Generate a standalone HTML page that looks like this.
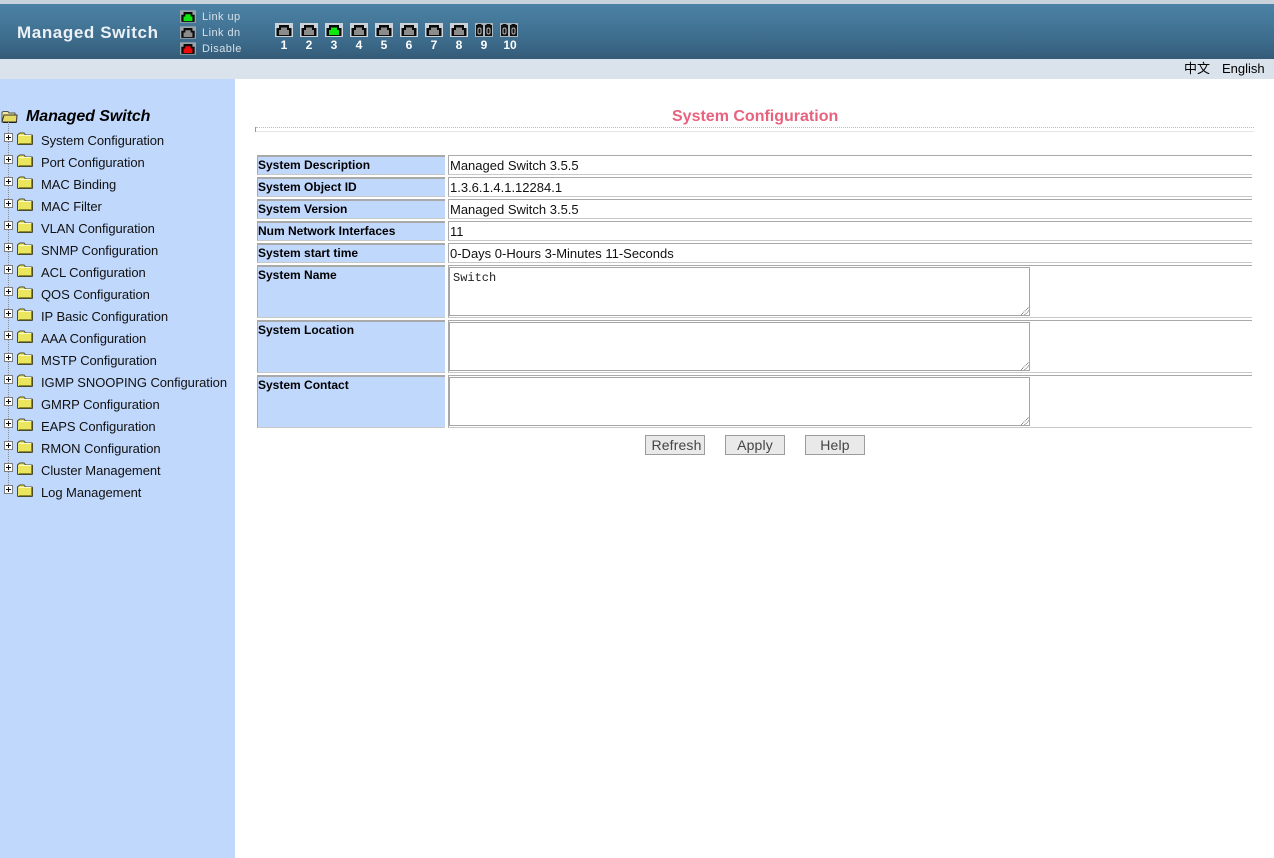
<!DOCTYPE html>
<html lang="en"><head><meta charset="utf-8"><title>System Configuration</title>
<style>
html,body{margin:0;padding:0;background:#fff;}
body{width:1274px;height:858px;position:relative;overflow:hidden;font-family:"Liberation Sans","Noto Sans CJK SC",sans-serif;color:#000;}
.a{position:absolute;white-space:nowrap;}
#top{left:0;top:0;width:1274px;height:59px;background:linear-gradient(#4b82a5 0,#467a9c 25%,#3d6c8c 65%,#345b78 100%);border-top:4px solid #c9d3db;box-sizing:border-box;}
#bar{left:0;top:59px;width:1274px;height:20px;background:#dae3ec;}
#side{left:0;top:79px;width:235px;height:779px;background:#c1d8fd;}
.leg{color:#d5e0e8;font-size:11px;letter-spacing:.45px;line-height:12px;left:202px;}
.n{color:#fff;font-weight:bold;font-size:12px;line-height:14px;top:38px;width:24px;text-align:center;}
.m{left:41px;font-size:13px;letter-spacing:-.06px;line-height:16px;color:#111;}
.l{left:257px;width:188px;background:#c1d8fd;border-top:2px solid #a9a9a9;border-left:1px solid #a9a9a9;border-bottom:1px solid #c8c8c8;box-sizing:border-box;font-weight:bold;font-size:12px;line-height:16px;color:#000;}
.v{left:448px;width:804px;border-top:1px solid #a9a9a9;border-left:1px solid #a9a9a9;border-bottom:1px solid #c8c8c8;box-sizing:border-box;font-size:13px;line-height:17px;padding:1px 0 0 1px;color:#111;}
.ta{left:449px;width:581px;border:1px solid #a5a5a5;background:#fff;box-sizing:border-box;font-family:"Liberation Mono",monospace;font-size:12px;padding:3px 0 0 3px;line-height:14px;color:#222;}
.b{top:435px;width:60px;height:20px;background:#e9e9e9;border:1px solid #9c9c9c;box-sizing:border-box;font-size:14px;line-height:18px;letter-spacing:.15px;text-align:center;color:#444;}
svg{position:absolute;display:block;}
.p{color:#c9d3d9;}
.g{color:#98a3a8;}
</style></head><body>
<svg width="0" height="0" style="position:absolute"><defs>
<symbol id="jack" viewBox="0 0 18 14"><rect width="18" height="14" fill="currentColor"/><path d="M1.500 13V5H4V2h10v3h2.500v8z" fill="#0b0b0b"/><path d="M4 12V7h2V4.500h6V7h2v5z" fill="#8c8c8c"/></symbol>
<symbol id="jackg" viewBox="0 0 18 14"><rect width="18" height="14" fill="currentColor"/><path d="M1.500 13V5H4V2h10v3h2.500v8z" fill="#0b0b0b"/><path d="M4 12V7h2V4.500h6V7h2v5z" fill="#0de80d"/></symbol>
<symbol id="jackr" viewBox="0 0 18 14"><rect width="18" height="14" fill="currentColor"/><path d="M1.500 13V5H4V2h10v3h2.500v8z" fill="#0b0b0b"/><path d="M4 12V7h2V4.500h6V7h2v5z" fill="#ef0b0b"/></symbol>
<symbol id="sfp" viewBox="0 0 18 14"><rect width="18" height="14" fill="#aab6bd"/><path d="M1 13V2h1.500V1h4v1H8v11zM10 13V2h1.500V1h4v1H17v11z" fill="#111"/><rect x="3" y="5" width="3" height="6" rx="1.500" fill="none" stroke="#b5b5b5"/><rect x="12" y="5" width="3" height="6" rx="1.500" fill="none" stroke="#b5b5b5"/></symbol>
<symbol id="fold" viewBox="0 0 16 13"><path d="M1 3 2.500 1h4L8 3h7v9.500H1z" fill="#ece65f"/><path d="M.5 3v9l.5 .5h14l.5-.5V3.500L15 3H8.500L7 1H3L1.500 2z" fill="none" stroke="#4a4a2c"/><path d="M2 3.500h12" stroke="#fffbc8"/><path d="M14.500 4v8M2 11.500h13" stroke="#8f8a2a"/></symbol>
<symbol id="plus" viewBox="0 0 9 9"><rect x=".5" y=".5" width="8" height="8" fill="#fff" stroke="#7d7d7d"/><path d="M2 4.500h5M4.500 2v5" stroke="#111"/></symbol>
<symbol id="open" viewBox="0 0 17 13"><path d="M1 11.500V2.500L2 1.500h5l1 1.500h6v2" fill="#ece79a" stroke="#555"/><path d="M1 12 3 5H16l-.5 7z" fill="#e5da62" stroke="#333"/><path d="M2 12.500h13.500" stroke="#222"/></symbol>
<symbol id="grip" viewBox="0 0 9 9"><path d="M0 9 9 0M4 9 9 4" stroke="#555" stroke-dasharray="1 1" fill="none"/></symbol>
</defs></svg>

<div class="a" id="top"></div>
<div class="a" id="bar"></div>
<div class="a" id="side"></div>

<div class="a" style="left:17px;top:23px;font-size:17px;font-weight:bold;letter-spacing:.6px;line-height:19px;color:#ebf1f5;">Managed Switch</div>
<svg class="g" style="left:180px;top:10px" width="16" height="13"><use href="#jackg" width="16" height="13"/></svg>
<svg class="g" style="left:180px;top:26px" width="16" height="13"><use href="#jack" width="16" height="13"/></svg>
<svg class="g" style="left:180px;top:42px" width="16" height="13"><use href="#jackr" width="16" height="13"/></svg>
<div class="a leg" style="top:11px">Link up</div>
<div class="a leg" style="top:27px">Link dn</div>
<div class="a leg" style="top:43px">Disable</div>

<svg class="p" style="left:275px;top:23px" width="18" height="14"><use href="#jack" width="18" height="14"/></svg>
<svg class="p" style="left:300px;top:23px" width="18" height="14"><use href="#jack" width="18" height="14"/></svg>
<svg class="p" style="left:325px;top:23px" width="18" height="14"><use href="#jackg" width="18" height="14"/></svg>
<svg class="p" style="left:350px;top:23px" width="18" height="14"><use href="#jack" width="18" height="14"/></svg>
<svg class="p" style="left:375px;top:23px" width="18" height="14"><use href="#jack" width="18" height="14"/></svg>
<svg class="p" style="left:400px;top:23px" width="18" height="14"><use href="#jack" width="18" height="14"/></svg>
<svg class="p" style="left:425px;top:23px" width="18" height="14"><use href="#jack" width="18" height="14"/></svg>
<svg class="p" style="left:450px;top:23px" width="18" height="14"><use href="#jack" width="18" height="14"/></svg>
<svg style="left:475px;top:23px" width="18" height="14"><use href="#sfp" width="18" height="14"/></svg>
<svg style="left:500px;top:23px" width="18" height="14"><use href="#sfp" width="18" height="14"/></svg>
<div class="a n" style="left:272px">1</div>
<div class="a n" style="left:297px">2</div>
<div class="a n" style="left:322px">3</div>
<div class="a n" style="left:347px">4</div>
<div class="a n" style="left:372px">5</div>
<div class="a n" style="left:397px">6</div>
<div class="a n" style="left:422px">7</div>
<div class="a n" style="left:447px">8</div>
<div class="a n" style="left:472px">9</div>
<div class="a n" style="left:498px">10</div>

<div class="a" style="left:1184px;top:61px;font-size:13px;line-height:16px;">中文</div>
<div class="a" style="left:1222px;top:61px;font-size:13px;line-height:16px;">English</div>

<svg style="left:1px;top:110px" width="17" height="13"><use href="#open" width="17" height="13"/></svg>
<div class="a" style="left:26px;top:107px;font-size:16px;font-style:italic;font-weight:bold;line-height:19px;letter-spacing:-.07px;">Managed Switch</div>
<svg style="left:0;top:122px" width="12" height="370"><path d="M8.500 0V370" stroke="#8a8a8a" stroke-dasharray="1 1"/></svg>

<svg style="left:4px;top:133px" width="9" height="9"><use href="#plus" width="9" height="9"/></svg><svg style="left:17px;top:132px" width="16" height="13"><use href="#fold" width="16" height="13"/></svg><div class="a m" style="top:133px">System Configuration</div>
<svg style="left:4px;top:155px" width="9" height="9"><use href="#plus" width="9" height="9"/></svg><svg style="left:17px;top:154px" width="16" height="13"><use href="#fold" width="16" height="13"/></svg><div class="a m" style="top:155px">Port Configuration</div>
<svg style="left:4px;top:177px" width="9" height="9"><use href="#plus" width="9" height="9"/></svg><svg style="left:17px;top:176px" width="16" height="13"><use href="#fold" width="16" height="13"/></svg><div class="a m" style="top:177px">MAC Binding</div>
<svg style="left:4px;top:199px" width="9" height="9"><use href="#plus" width="9" height="9"/></svg><svg style="left:17px;top:198px" width="16" height="13"><use href="#fold" width="16" height="13"/></svg><div class="a m" style="top:199px">MAC Filter</div>
<svg style="left:4px;top:221px" width="9" height="9"><use href="#plus" width="9" height="9"/></svg><svg style="left:17px;top:220px" width="16" height="13"><use href="#fold" width="16" height="13"/></svg><div class="a m" style="top:221px">VLAN Configuration</div>
<svg style="left:4px;top:243px" width="9" height="9"><use href="#plus" width="9" height="9"/></svg><svg style="left:17px;top:242px" width="16" height="13"><use href="#fold" width="16" height="13"/></svg><div class="a m" style="top:243px">SNMP Configuration</div>
<svg style="left:4px;top:265px" width="9" height="9"><use href="#plus" width="9" height="9"/></svg><svg style="left:17px;top:264px" width="16" height="13"><use href="#fold" width="16" height="13"/></svg><div class="a m" style="top:265px">ACL Configuration</div>
<svg style="left:4px;top:287px" width="9" height="9"><use href="#plus" width="9" height="9"/></svg><svg style="left:17px;top:286px" width="16" height="13"><use href="#fold" width="16" height="13"/></svg><div class="a m" style="top:287px">QOS Configuration</div>
<svg style="left:4px;top:309px" width="9" height="9"><use href="#plus" width="9" height="9"/></svg><svg style="left:17px;top:308px" width="16" height="13"><use href="#fold" width="16" height="13"/></svg><div class="a m" style="top:309px">IP Basic Configuration</div>
<svg style="left:4px;top:331px" width="9" height="9"><use href="#plus" width="9" height="9"/></svg><svg style="left:17px;top:330px" width="16" height="13"><use href="#fold" width="16" height="13"/></svg><div class="a m" style="top:331px">AAA Configuration</div>
<svg style="left:4px;top:353px" width="9" height="9"><use href="#plus" width="9" height="9"/></svg><svg style="left:17px;top:352px" width="16" height="13"><use href="#fold" width="16" height="13"/></svg><div class="a m" style="top:353px">MSTP Configuration</div>
<svg style="left:4px;top:375px" width="9" height="9"><use href="#plus" width="9" height="9"/></svg><svg style="left:17px;top:374px" width="16" height="13"><use href="#fold" width="16" height="13"/></svg><div class="a m" style="top:375px">IGMP SNOOPING Configuration</div>
<svg style="left:4px;top:397px" width="9" height="9"><use href="#plus" width="9" height="9"/></svg><svg style="left:17px;top:396px" width="16" height="13"><use href="#fold" width="16" height="13"/></svg><div class="a m" style="top:397px">GMRP Configuration</div>
<svg style="left:4px;top:419px" width="9" height="9"><use href="#plus" width="9" height="9"/></svg><svg style="left:17px;top:418px" width="16" height="13"><use href="#fold" width="16" height="13"/></svg><div class="a m" style="top:419px">EAPS Configuration</div>
<svg style="left:4px;top:441px" width="9" height="9"><use href="#plus" width="9" height="9"/></svg><svg style="left:17px;top:440px" width="16" height="13"><use href="#fold" width="16" height="13"/></svg><div class="a m" style="top:441px">RMON Configuration</div>
<svg style="left:4px;top:463px" width="9" height="9"><use href="#plus" width="9" height="9"/></svg><svg style="left:17px;top:462px" width="16" height="13"><use href="#fold" width="16" height="13"/></svg><div class="a m" style="top:463px">Cluster Management</div>
<svg style="left:4px;top:485px" width="9" height="9"><use href="#plus" width="9" height="9"/></svg><svg style="left:17px;top:484px" width="16" height="13"><use href="#fold" width="16" height="13"/></svg><div class="a m" style="top:485px">Log Management</div>

<div class="a" style="left:672px;top:107px;font-size:16px;font-weight:bold;line-height:19px;color:#e8627e;">System Configuration</div>
<div class="a" style="left:256px;top:127px;width:998px;height:0;border-top:1px dotted #bdbdbd;"></div>
<div class="a" style="left:256px;top:131px;width:998px;height:0;border-top:1px solid #e6e6e6;"></div>
<div class="a" style="left:255px;top:127px;width:1px;height:5px;background:#999;"></div>

<div class="a l" style="top:155px;height:20px">System Description</div><div class="a v" style="top:155px;height:20px">Managed Switch 3.5.5</div>
<div class="a l" style="top:177px;height:20px">System Object ID</div><div class="a v" style="top:177px;height:20px">1.3.6.1.4.1.12284.1</div>
<div class="a l" style="top:199px;height:20px">System Version</div><div class="a v" style="top:199px;height:20px">Managed Switch 3.5.5</div>
<div class="a l" style="top:221px;height:20px">Num Network Interfaces</div><div class="a v" style="top:221px;height:20px">11</div>
<div class="a l" style="top:243px;height:20px">System start time</div><div class="a v" style="top:243px;height:20px">0-Days 0-Hours 3-Minutes 11-Seconds</div>
<div class="a l" style="top:265px;height:53px">System Name</div><div class="a v" style="top:265px;height:53px"></div>
<div class="a l" style="top:320px;height:53px">System Location</div><div class="a v" style="top:320px;height:53px"></div>
<div class="a l" style="top:375px;height:53px">System Contact</div><div class="a v" style="top:375px;height:53px"></div>

<div class="a ta" style="top:267px;height:49px">Switch</div>
<div class="a ta" style="top:322px;height:49px"></div>
<div class="a ta" style="top:377px;height:49px"></div>
<svg style="left:1021px;top:307px" width="8" height="8"><use href="#grip" width="8" height="8"/></svg>
<svg style="left:1021px;top:362px" width="8" height="8"><use href="#grip" width="8" height="8"/></svg>
<svg style="left:1021px;top:417px" width="8" height="8"><use href="#grip" width="8" height="8"/></svg>

<div class="a b" style="left:645px;padding-left:3px">Refresh</div>
<div class="a b" style="left:725px">Apply</div>
<div class="a b" style="left:805px">Help</div>
</body></html>
